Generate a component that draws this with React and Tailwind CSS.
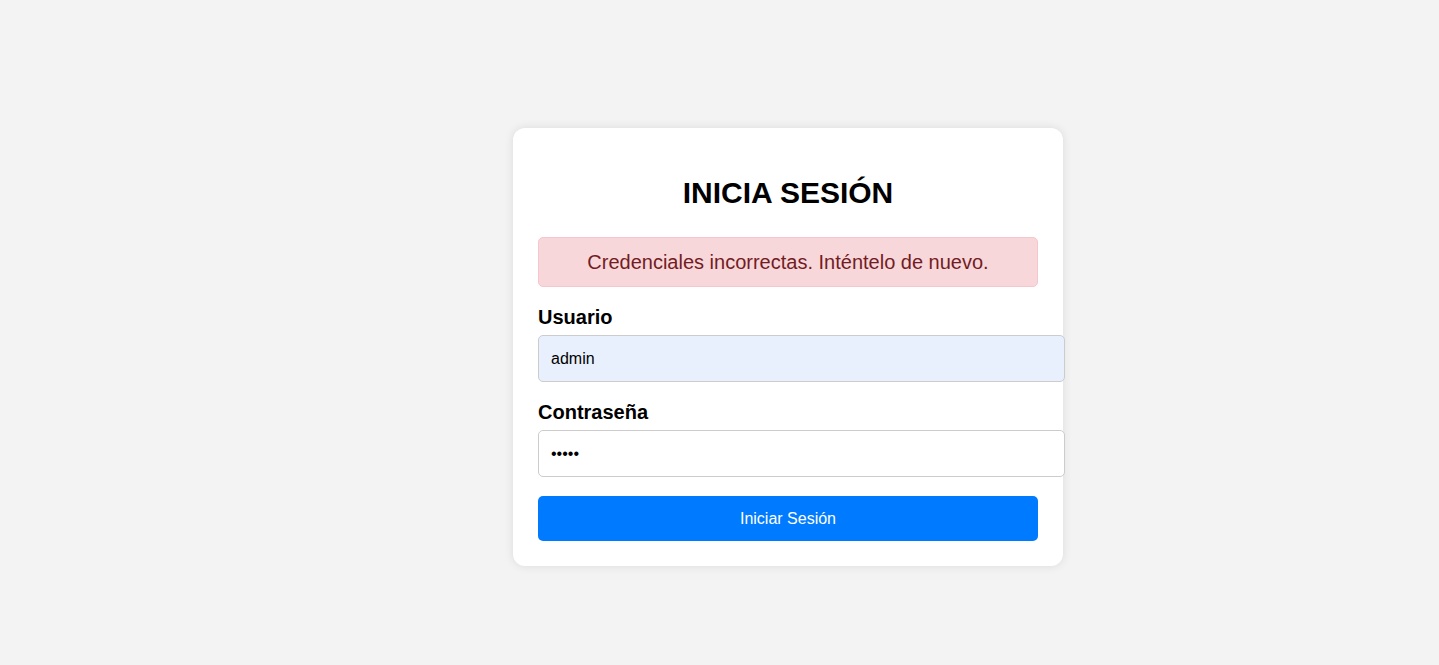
import React from 'react';

export default function App() {
  return (
    <div className="min-h-[665px] w-full bg-[#f3f3f3] pt-[128px] pl-[513px] font-['Liberation_Sans',Arial,sans-serif]">
      <div className="w-[550px] rounded-[12px] bg-white px-[25px] pt-[25px] pb-[25px] shadow-[0_0_10px_rgba(0,0,0,0.1)]">
        <h1 className="mt-[21px] mb-[26px] text-center text-[30px] font-bold leading-[37px] text-black">
          INICIA SESIÓN
        </h1>

        <div className="mb-[19px] flex h-[50px] items-center justify-center rounded-[5px] border border-[#f5c6cb] bg-[#f8d7da] text-[20px] text-[#721c24]">
          Credenciales incorrectas. Inténtelo de nuevo.
        </div>

        <form onSubmit={(e) => e.preventDefault()}>
          <label className="mb-[6px] block text-[20px] font-bold leading-[23px] text-black">Usuario</label>
          <input
            type="text"
            defaultValue="admin"
            className="mb-[19px] block h-[47px] w-[527px] rounded-[5px] border border-[#ccc] bg-[#e8f0fe] px-[12px] text-[16px] text-black outline-none"
          />

          <label className="mb-[6px] block text-[20px] font-bold leading-[23px] text-black">Contraseña</label>
          <input
            type="password"
            defaultValue="admin"
            className="mb-[19px] block h-[47px] w-[527px] rounded-[5px] border border-[#ccc] bg-white px-[12px] text-[16px] text-black outline-none"
          />

          <button
            type="submit"
            className="block h-[45px] w-full rounded-[5px] bg-[#007bff] text-[16px] text-white"
          >
            Iniciar Sesión
          </button>
        </form>
      </div>
    </div>
  );
}
